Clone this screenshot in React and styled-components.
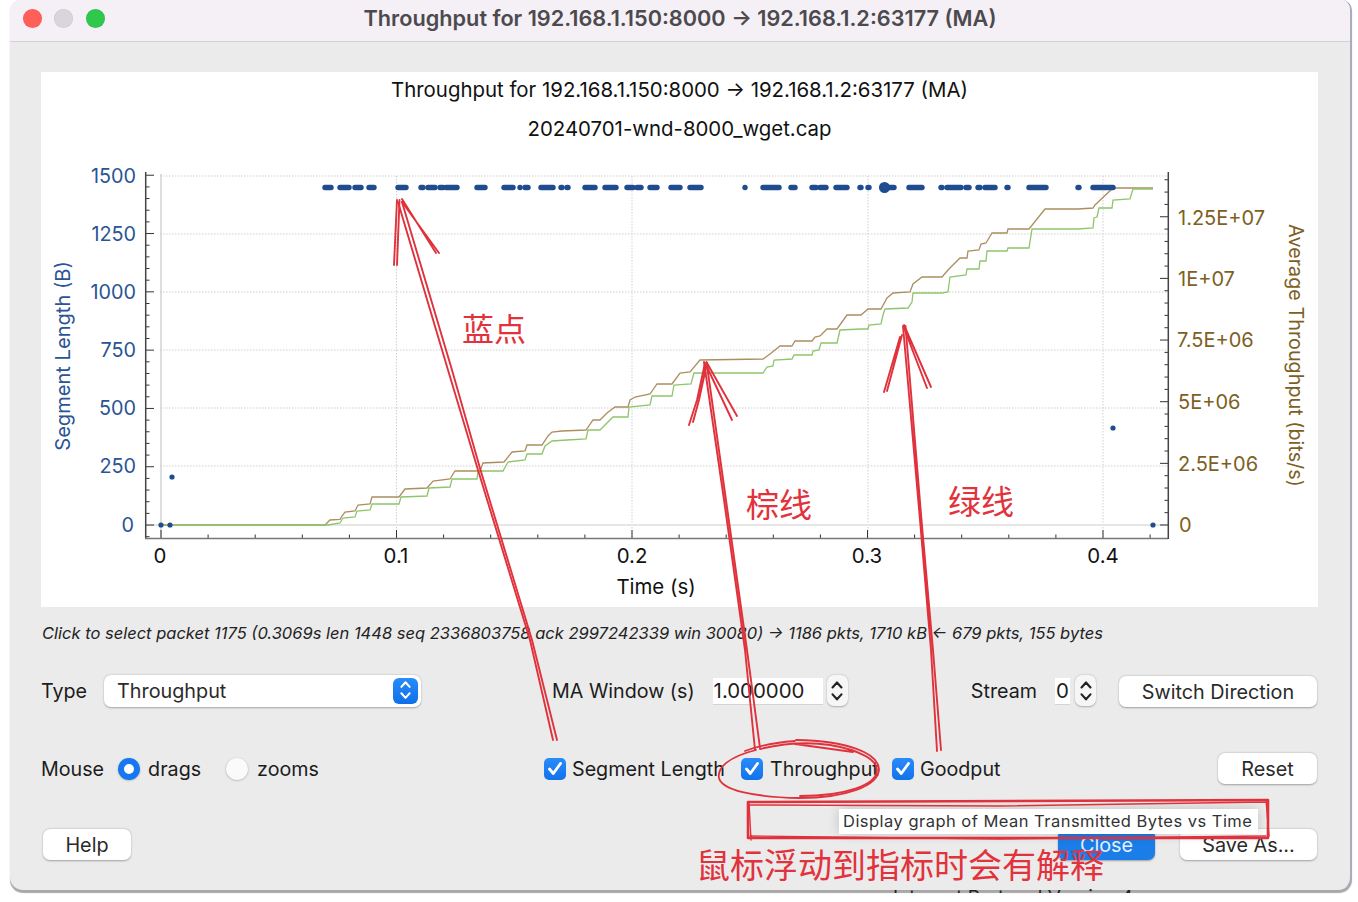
import React from 'react';
import styled, { createGlobalStyle } from 'styled-components';

const Global = createGlobalStyle`
  html, body { margin: 0; padding: 0; background: #fff; }
  body { font-family: Inter, "Noto Sans", "Liberation Sans", sans-serif; }
`;

const Stage = styled.div`
  position: relative;
  width: 1358px;
  height: 902px;
  overflow: hidden;
  background: #fff;
`;
const Window = styled.div`
  position: absolute;
  left: 10px;
  top: 0;
  box-sizing: border-box;
  width: 1342px;
  height: 890px;
  background: #ebebeb;
  border-right: 2px solid #aaaac0;
  border-radius: 10px 10px 13px 13px;
  box-shadow: 0 3px 1px #a8a8a8;
  display: flex;
  flex-direction: column;
  overflow: hidden;
`;
const TitleBar = styled.div`
  height: 41px;
  flex: none;
  box-sizing: content-box;
  background: #f4f0f6;
  border-bottom: 1.5px solid #d2d0d4;
  display: grid;
  grid-template-columns: 1fr auto 1fr;
  align-items: center;
  padding: 0 12.5px;
`;
const Lights = styled.div`
  display: flex;
  gap: 12.5px;
  margin-top: -5px;
`;
const Light = styled.span`
  width: 19px;
  height: 19px;
  border-radius: 50%;
  background: ${p => p.$c};
  box-shadow: inset 0 0 0 0.5px rgba(0, 0, 0, 0.08);
`;
const WindowTitle = styled.div`
  font-size: 21.7px;
  font-weight: 600;
  color: #4c4a4e;
  margin-top: -5px;
  white-space: nowrap;
`;
const Body = styled.div`
  flex: 1;
  display: flex;
  flex-direction: column;
  padding: 30px 32px 0 31px;
`;
const PlotPanel = styled.div`
  width: 1277px;
  height: 535px;
  flex: none;
  background: #fff;
  display: flex;
  flex-direction: column;
  align-items: center;
`;
const ChartTitle = styled.div`
  height: 39px;
  line-height: 39px;
  font-size: 20.4px;
  color: #111;
  white-space: nowrap;
  &:first-child { margin-top: -2px; }
`;
const ChartSvg = styled.svg`
  display: block;
  width: 1277px;
  height: 456px;
  margin-top: 3px;
  flex: none;
`;
const Hint = styled.div`
  height: 26px;
  margin: 13px 0 0 1px;
  line-height: 26px;
  font-size: 16.5px;
  font-style: italic;
  color: #222;
  white-space: nowrap;
`;
const Row = styled.div`
  display: grid;
  grid-template-columns: ${p => p.$cols};
  align-items: center;
  height: 33px;
  margin-top: ${p => p.$mt}px;
`;
const Cluster = styled.div`
  display: flex;
  align-items: center;
  gap: ${p => p.$gap || 0}px;
`;
const Label = styled.span`
  font-size: 19.7px;
  color: #1c1c1c;
  white-space: nowrap;
  margin-left: ${p => p.$ml || 0}px;
  ${p => p.$w && `width: ${p.$w}px;`}
`;
const SelectBox = styled.div`
  box-sizing: border-box;
  width: 317px;
  height: 32px;
  background: #fff;
  border-radius: 7px;
  box-shadow: 0 0.5px 2px rgba(0, 0, 0, 0.3);
  display: flex;
  align-items: center;
  justify-content: space-between;
  padding: 0 3px 0 13px;
  font-size: 19.8px;
  color: #2a2a2a;
`;
const SelectArrow = styled.span`
  width: 25px;
  height: 26px;
  border-radius: 6px;
  background: linear-gradient(#2a8bfb, #0f6fe8);
  display: flex;
  align-items: center;
  justify-content: center;
`;
const TextInput = styled.div`
  box-sizing: border-box;
  width: ${p => p.$w}px;
  height: 26px;
  margin-left: ${p => p.$ml}px;
  background: #fff;
  box-shadow: 0 1px 0 #d4d4d4;
  font-size: 20.4px;
  line-height: 26px;
  color: #1c1c1c;
  padding-left: 1px;
`;
const Stepper = styled.div`
  width: 21px;
  height: 31px;
  margin-left: ${p => p.$ml}px;
  border-radius: 7px;
  background: #f6f6f6;
  box-shadow: 0 0.5px 2px rgba(0, 0, 0, 0.28);
  display: flex;
  align-items: center;
  justify-content: center;
`;
const Button = styled.div`
  box-sizing: border-box;
  width: ${p => p.$w}px;
  height: 31px;
  margin: ${p => p.$m || 0};
  border-radius: 7px;
  background: #fff;
  box-shadow: 0 0.5px 2px rgba(0, 0, 0, 0.32);
  display: flex;
  align-items: center;
  justify-content: center;
  font-size: 19.8px;
  color: #2a2a2a;
`;
const PrimaryButton = styled(Button)`
  background: #1a7de8;
  color: #e4f0ff;
`;
const Radio = styled.span`
  box-sizing: border-box;
  width: 22px;
  height: 22px;
  margin-left: ${p => p.$ml}px;
  border-radius: 50%;
  background: ${p => (p.$on ? '#fff' : '#fafafa')};
  border: ${p => (p.$on ? '6.5px solid #1578f0' : 'none')};
  box-shadow: 0 0.5px 2px rgba(0, 0, 0, 0.3);
`;
const Check = styled.span`
  width: 22px;
  height: 22px;
  border-radius: 5px;
  background: linear-gradient(#2a8bfb, #1272ea);
  display: flex;
  align-items: center;
  justify-content: center;
`;
const Tooltip = styled.div`
  position: absolute;
  left: 839px;
  top: 809px;
  box-sizing: border-box;
  width: 419px;
  height: 25px;
  background: #fff;
  box-shadow: 0 0 12px rgba(0, 0, 0, 0.18);
  padding-left: 4px;
  font-size: 16.5px;
  letter-spacing: 0.47px;
  line-height: 25px;
  color: #333;
  white-space: nowrap;
`;
const StrayLine = styled.div`
  position: absolute;
  left: 893px;
  top: 887px;
  width: 260px;
  height: 6px;
  overflow: hidden;
  font-size: 19px;
  line-height: 22px;
  color: #222;
  white-space: nowrap;
`;
const MarksSvg = styled.svg`
  position: absolute;
  left: 0;
  top: 0;
  width: 1358px;
  height: 902px;
  pointer-events: none;
`;
const Scribble = styled.span`
  position: absolute;
  left: ${p => p.$x}px;
  top: ${p => p.$y}px;
  font-family: "Noto Sans CJK SC", sans-serif;
  font-size: ${p => p.$size}px;
  line-height: 1;
  font-weight: 400;
  color: #e2323c;
  white-space: nowrap;
`;

const BLUE = '#2a5494';
const BROWN = '#7d5f24';
const DOT = '#1f4b8f';
const rows = [176, 234, 292, 350, 408, 466];
const cols = [396.5, 632, 868, 1103];

const runs = [
  [325, 331], [340, 349], [355, 361], [369, 374], [398, 406], [421, 423], [428, 435], [440, 443], [446, 457],
  [477, 485], [504, 513], [520, 520], [525, 528], [541, 553], [561, 562], [567, 568], [585, 595], [605, 616],
  [627, 633], [637, 641], [650, 657], [671, 680], [690, 701], [745, 745], [763, 779], [791, 795], [812, 816],
  [820, 826], [836, 847], [860, 861], [868, 869], [889, 894], [909, 922], [941, 942], [947, 961], [966, 969],
  [978, 980], [985, 995], [1007, 1008], [1029, 1046], [1078, 1079], [1093, 1113]
];
const singles = [[172, 477], [161, 525], [170, 525], [1113, 428], [1153, 525]];

const brown = '161,525 325,525 330,520 340,519.3 342,516 345,512 355,511 358,505 370,504 372,497 399,497 405,489 427,488 433,481 450,479 455,471 480,471 483,463 504,462 512,452 525,451 527,445 542,445 548,436 552,432 562,431 586,430 593,420 600,420 607,413 615,407 628,407 630,400 635,397 650,394 657,384 672,384 680,373 690,372 700,360 763,359 770,354 780,346 792,346 795,341 812,341 815,337 820,336 827,329 837,329 847,315 861,315 868,309 881,309 887,298 893,293 910,292 913,284 922,277 942,277 948,270 960,258 967,258 968,251 979,250 981,244 986,243 992,233 1007,233 1008,229 1029,229 1045,209 1078,209 1093,208 1095,205 1113,188 1153,188';
const green = '161,525 328,525 340,523 343,518 355,517 357,511 370,510 372,504 399,504 401,497 427,496 429,488 450,487 452,479 477,479 478,471 503,471 508,462 525,460 527,454 542,454 545,446 552,441 567,440 586,439 588,430 600,430 613,417 628,417 629,407 650,405 652,396 672,396 674,385 691,384 694,373 763,373 767,367 773,366 774,360 792,359 794,355 812,355 813,351 819,350 821,343 837,343 840,330 861,329 868,329 869,325 881,324 883,315 885,309 908,308 912,302 913,293 942,293 948,292 950,277 966,275 967,269 979,269 980,261 986,261 987,251 1007,251 1008,248 1029,248 1032,229 1078,229 1093,228 1094,218 1097,217 1099,208 1112,208 1113,200 1130,199 1133,189 1153,189';

function Chart() {
  const leftMinor = Array.from({ length: 32 }, (_, i) => 536.7 - i * 11.66);
  const rightMinor = Array.from({ length: 29 }, (_, i) => 525 - i * 12.33);
  const bottomMinor = Array.from({ length: 22 }, (_, i) => 161 + i * 47.1);
  return (
    <ChartSvg viewBox="41 151 1277 456" fontFamily="Inter, sans-serif">
      <g stroke="#cfcfcf" strokeWidth="1" strokeDasharray="1.5 1.5" fill="none">
        {rows.map(y => <line key={y} x1="160" x2="1168" y1={y} y2={y} />)}
        {cols.map(x => <line key={x} x1={x} x2={x} y1="176" y2="538" />)}
      </g>
      <line x1="161" x2="161" y1="174" y2="538" stroke="#cdcdcd" strokeWidth="1.3" />
      <line x1="146" x2="1168" y1="525" y2="525" stroke="#e6e6e6" strokeWidth="2" />

      <g stroke="#333" strokeWidth="1" fill="none">
        {leftMinor.map((y, i) => {
          const major = (i - 1) % 5 === 0;
          return <line key={i} x1="146" x2={major ? 154 : 149.5} y1={y} y2={y} />;
        })}
        {rightMinor.map((y, i) => (
          <line key={i} x1={i % 5 === 0 ? 1160 : 1164.5} x2="1168" y1={y} y2={y} />
        ))}
        {bottomMinor.map((x, i) => (
          <line key={i} x1={x} x2={x} y1={i % 5 === 0 ? 530 : 534.5} y2="538" />
        ))}
      </g>
      <g stroke="#444" strokeWidth="1.5" fill="none">
        <line x1="145.7" x2="145.7" y1="172" y2="539" />
        <line x1="145" x2="1168" y1="538.5" y2="538.5" stroke="#777" />
        <line x1="1168.3" x2="1168.3" y1="172" y2="539" />
      </g>

      <polyline points={brown} fill="none" stroke="#ab8f60" strokeWidth="1.3" />
      <polyline points={green} fill="none" stroke="#8fc56c" strokeWidth="1.3" />

      <g stroke={DOT} strokeWidth="5.4" strokeLinecap="round">
        {runs.map(([a, b]) => <line key={a} x1={a} x2={b + 0.01} y1="187.5" y2="187.5" />)}
      </g>
      <circle cx="884.5" cy="187.5" r="4.8" fill={DOT} stroke={DOT} strokeWidth="1.5" />
      {singles.map(([x, y]) => <circle key={x} cx={x} cy={y} r="2.6" fill={DOT} />)}

      <g fill={BLUE} fontSize="19.8" textAnchor="end">
        <text x="136" y="182.500">1500</text>
        <text x="136" y="240.500">1250</text>
        <text x="136" y="298.500">1000</text>
        <text x="136" y="356.500">750</text>
        <text x="136" y="414.500">500</text>
        <text x="136" y="472.500">250</text>
        <text x="134" y="531.500">0</text>
      </g>
      <text fill={BLUE} fontSize="20.1" textAnchor="middle" transform="translate(70 356) rotate(-90)">Segment Length (B)</text>

      <g fill={BROWN} fontSize="20">
        <text x="1178" y="224.500">1.25E+07</text>
        <text x="1178" y="285.500">1E+07</text>
        <text x="1177" y="346.500">7.5E+06</text>
        <text x="1178" y="408.500">5E+06</text>
        <text x="1178" y="470.500">2.5E+06</text>
        <text x="1179" y="531.500">0</text>
      </g>
      <text fill={BROWN} fontSize="19.8" textAnchor="middle" transform="translate(1289 355.5) rotate(90)">Average Throughput (bits/s)</text>

      <g fill="#111" fontSize="20.4" textAnchor="middle">
        <text x="160" y="563">0</text>
        <text x="396" y="563">0.1</text>
        <text x="632" y="563">0.2</text>
        <text x="867" y="563">0.3</text>
        <text x="1103" y="563">0.4</text>
        <text x="656" y="594">Time (s)</text>
      </g>
    </ChartSvg>
  );
}

const UpDown = ({ color, size = 14 }) => (
  <svg width={size} height={size * 1.7} viewBox="0 0 14 24" fill="none" stroke={color} strokeWidth="2.2" strokeLinecap="round" strokeLinejoin="round">
    <path d="M2.5 8.5 7 3.5l4.5 5" />
    <path d="M2.5 15.5 7 20.5l4.5-5" />
  </svg>
);
const Tick = () => (
  <svg width="16" height="15" viewBox="0 0 16 15" fill="none" stroke="#fff" strokeWidth="2.8" strokeLinecap="round" strokeLinejoin="round">
    <path d="M2.5 8 6.3 12.5 13.5 2.5" />
  </svg>
);

function Marks() {
  return (
    <MarksSvg viewBox="0 0 1358 902" fill="none" stroke="#e0323c" strokeLinecap="round" strokeLinejoin="round">
      <g strokeWidth="1.9">
        <path d="M397 200 394 265M399.500 200 397 265M402 199 436 253M402 202 439 253" />
        <path d="M398 202 448 370 478 470 530 640 553 740" />
        <path d="M402 202 452 370 480.500 470 532 640 557 740" />

        <path d="M705 363 697 400 689 425M707 363 699 400 693 422" />
        <path d="M707 363 737 416M707 367 732 420" />
        <path d="M704 362 724 500 745 650 755 750M706.500 362 726 500 747 650 760 748" />

        <path d="M900 337 884 392M902 335 887 391" />
        <path d="M904 325 931 387M904 328 927 388" />
        <path d="M903 326 920 520 931 650 937 751M905.500 326 921.500 520 933 650 941 750" />
      </g>
      <g strokeWidth="1.8">
        <path d="M756 750C728 757 717 768 719 778 722 790 752 797 800 798 845 798 879 786 879 769 878 753 848 741 796 740" />
        <path d="M795 741C770 743 755 747 745 751M795 744 853 752M760 749C785 743 810 742 830 745 860 750 877 760 877 770 877 785 845 796 800 796" />
      </g>
      <path d="M748 802 1268 800 1268 838 748 838Z" strokeWidth="2.6" />
      <path d="M748 805 1000 806 1266 802M749 802 751 840M1266 800 1269 836M750 836 1000 839 1266 836" strokeWidth="1.4" />
    </MarksSvg>
  );
}

export default function App() {
  return (
    <Stage>
      <Global />
      <Window>
        <TitleBar>
          <Lights>
            <Light $c="#ff5f57" />
            <Light $c="#d9d5dc" />
            <Light $c="#2fc74c" />
          </Lights>
          <WindowTitle>Throughput for 192.168.1.150:8000 → 192.168.1.2:63177 (MA)</WindowTitle>
          <span />
        </TitleBar>
        <Body>
          <PlotPanel>
            <ChartTitle>Throughput for 192.168.1.150:8000 → 192.168.1.2:63177 (MA)</ChartTitle>
            <ChartTitle>20240701-wnd-8000_wget.cap</ChartTitle>
            <Chart />
          </PlotPanel>
          <Hint>Click to select packet 1175 (0.3069s len 1448 seq 2336803758 ack 2997242339 win 30080) → 1186 pkts, 1710 kB ← 679 pkts, 155 bytes</Hint>
          <Row $cols="511px 1fr auto" $mt={28}>
            <Cluster $gap={17}>
              <Label>Type</Label>
              <SelectBox>
                Throughput
                <SelectArrow><UpDown color="#fff" size={13} /></SelectArrow>
              </SelectBox>
            </Cluster>
            <Cluster>
              <Label>MA Window (s)</Label>
              <TextInput $w={110} $ml={18}>1.000000</TextInput>
              <Stepper $ml={4}><UpDown color="#222" /></Stepper>
            </Cluster>
            <Cluster>
              <Label>Stream</Label>
              <TextInput $w={15} $ml={18}>0</TextInput>
              <Stepper $ml={5}><UpDown color="#222" /></Stepper>
              <Button $w={198} $m="2px 1px 0 23px">Switch Direction</Button>
            </Cluster>
          </Row>
          <Row $cols="503px 1fr auto" $mt={45}>
            <Cluster>
              <Label>Mouse</Label>
              <Radio $on $ml={14} />
              <Label $ml={8}>drags</Label>
              <Radio $ml={25} />
              <Label $ml={9}>zooms</Label>
            </Cluster>
            <Cluster>
              <Check><Tick /></Check>
              <Label $ml={6} $w={169}>Segment Length</Label>
              <Check><Tick /></Check>
              <Label $ml={7} $w={122}>Throughput</Label>
              <Check><Tick /></Check>
              <Label $ml={6}>Goodput</Label>
            </Cluster>
            <Button $w={99} $m="0 1px 0 0">Reset</Button>
          </Row>
          <Row $cols="1fr auto auto" $mt={43}>
            <Button $w={88} $m="0 0 0 2px">Help</Button>
            <PrimaryButton $w={97} $m="0 25px 0 0">Close</PrimaryButton>
            <Button $w={137} $m="0 1px 0 0">Save As...</Button>
          </Row>
        </Body>
      </Window>
      <StrayLine>Internet Protocol Version 4</StrayLine>
      <Tooltip>Display graph of Mean Transmitted Bytes vs Time</Tooltip>
      <Marks />
      <Scribble $x={462} $y={311} $size={32}>蓝点</Scribble>
      <Scribble $x={746} $y={487} $size={33}>棕线</Scribble>
      <Scribble $x={948} $y={484} $size={33}>绿线</Scribble>
      <Scribble $x={696} $y={847} $size={34}>鼠标浮动到指标时会有解释</Scribble>
    </Stage>
  );
}
